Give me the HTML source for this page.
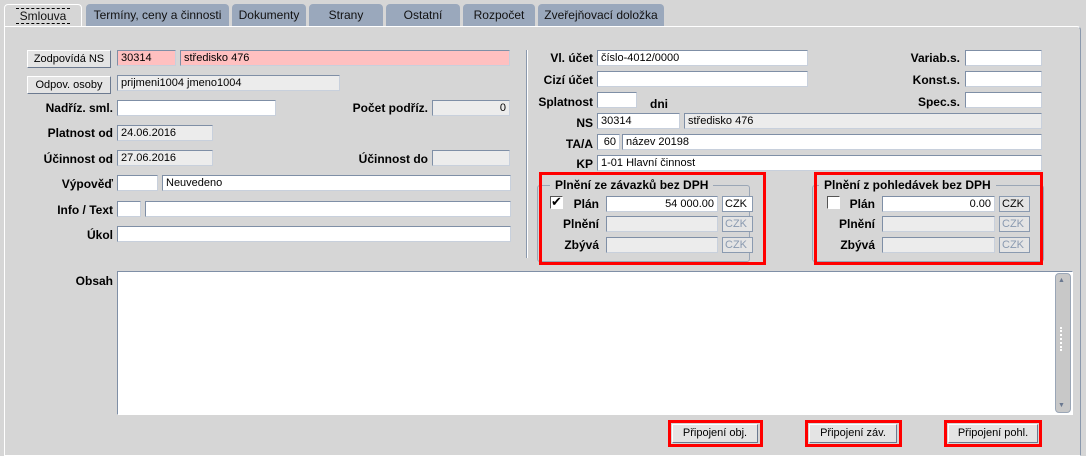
<!DOCTYPE html>
<html><head><meta charset="utf-8"><style>
*{box-sizing:border-box;margin:0;padding:0}
body{width:1086px;height:451px;background:#d6d6d6;font-family:"Liberation Sans",Arial,sans-serif;font-size:12px;color:#000;position:relative;overflow:hidden}
.a{position:absolute}
.tab{position:absolute;top:4px;height:22px;background:#9aa8bc;border-radius:4px 4px 0 0;text-align:center;line-height:22px;font-size:12px;color:#111}
.panel{position:absolute;left:4px;top:26px;width:1077px;height:430px;border:1px solid #fff;border-right-color:#8a98ac;border-radius:0 4px 0 0}
.f{position:absolute;height:16px;background:#fff;border:1px solid #7f8fa6;border-right-color:#c8d0dc;border-bottom-color:#c8d0dc;font-size:11px;line-height:14px;padding:0 3px;white-space:nowrap;overflow:hidden}
.g{background:#ececec}
.p{background:#ffc0c0}
.r{text-align:right}
.l{position:absolute;font-weight:bold;font-size:12px;white-space:nowrap}
.lr{position:absolute;font-weight:bold;font-size:12px;text-align:right;white-space:nowrap}
.btn{position:absolute;height:18px;background:#e4e4e4;border:1px solid #fff;border-right-color:#6c7a90;border-bottom-color:#6c7a90;font-size:11px;text-align:center;line-height:16px}
.red{position:absolute;border:3px solid #f00}
.grp{position:absolute;border:1px solid #9aa6b6;border-radius:3px}
.czk{position:absolute;height:16px;border:1px solid #8a9ab0;font-size:11px;line-height:14px;padding-left:2px;background:#fff}
.czkd{color:#8a9ab0;background:#e4e4e4}
.cb{position:absolute;width:13px;height:13px;background:#fff;border:1px solid #555;border-right-color:#fff;border-bottom-color:#fff}
</style></head><body>
<div class="panel"></div>
<div class="tab" style="left:4px;width:78px;background:#d6d6d6;border:1px solid #fff;border-bottom:none"><span style="border:1px dashed #000;border-width:1px 0;padding:0 4px">Smlouva</span></div>
<div class="tab" style="left:86px;width:143px">Termíny, ceny a činnosti</div>
<div class="tab" style="left:232px;width:74px">Dokumenty</div>
<div class="tab" style="left:309px;width:74px">Strany</div>
<div class="tab" style="left:386px;width:74px">Ostatní</div>
<div class="tab" style="left:463px;width:72px">Rozpočet</div>
<div class="tab" style="left:538px;width:126px">Zveřejňovací doložka</div>

<div class="btn" style="left:27px;top:50px;width:84px">Zodpovídá NS</div>
<div class="f p" style="left:117px;top:50px;width:59px">30314</div>
<div class="f p" style="left:180px;top:50px;width:330px">středisko 476</div>
<div class="btn" style="left:27px;top:76px;width:84px">Odpov. osoby</div>
<div class="f g" style="left:117px;top:75px;width:223px">prijmeni1004 jmeno1004</div>
<div class="lr" style="right:973px;top:101px">Nadříz. sml.</div>
<div class="f" style="left:117px;top:100px;width:159px"></div>
<div class="lr" style="right:658px;top:101px">Počet podříz.</div>
<div class="f g r" style="left:432px;top:100px;width:78px">0</div>
<div class="lr" style="right:973px;top:126px">Platnost od</div>
<div class="f g" style="left:117px;top:125px;width:96px">24.06.2016</div>
<div class="lr" style="right:973px;top:152px">Účinnost od</div>
<div class="f g" style="left:117px;top:150px;width:96px">27.06.2016</div>
<div class="lr" style="right:658px;top:152px">Účinnost do</div>
<div class="f g" style="left:432px;top:150px;width:78px"></div>
<div class="lr" style="right:973px;top:177px">Výpověď</div>
<div class="f" style="left:117px;top:175px;width:41px"></div>
<div class="f" style="left:162px;top:175px;width:349px">Neuvedeno</div>
<div class="lr" style="right:973px;top:203px">Info / Text</div>
<div class="f" style="left:117px;top:201px;width:24px"></div>
<div class="f" style="left:145px;top:201px;width:366px"></div>
<div class="lr" style="right:973px;top:228px">Úkol</div>
<div class="f" style="left:117px;top:226px;width:394px"></div>
<div class="a" style="left:526px;top:50px;width:2px;height:208px;border-left:1px solid #8a98ac;border-right:1px solid #fff"></div>

<div class="lr" style="right:493px;top:51px">Vl. účet</div>
<div class="f" style="left:597px;top:50px;width:211px">číslo-4012/0000</div>
<div class="lr" style="right:126px;top:51px">Variab.s.</div>
<div class="f" style="left:965px;top:50px;width:77px"></div>
<div class="lr" style="right:493px;top:73px">Cizí účet</div>
<div class="f" style="left:597px;top:71px;width:211px"></div>
<div class="lr" style="right:126px;top:73px">Konst.s.</div>
<div class="f" style="left:965px;top:71px;width:77px"></div>
<div class="lr" style="right:493px;top:95px">Splatnost</div>
<div class="f" style="left:597px;top:92px;width:40px"></div>
<div class="l" style="left:650px;top:97px">dni</div>
<div class="lr" style="right:126px;top:95px">Spec.s.</div>
<div class="f" style="left:965px;top:92px;width:77px"></div>
<div class="lr" style="right:493px;top:116px">NS</div>
<div class="f" style="left:597px;top:113px;width:83px">30314</div>
<div class="f g" style="left:684px;top:113px;width:358px">středisko 476</div>
<div class="lr" style="right:493px;top:137px">TA/A</div>
<div class="f r" style="left:597px;top:134px;width:23px">60</div>
<div class="f" style="left:622px;top:134px;width:420px">název 20198</div>
<div class="lr" style="right:493px;top:157px">KP</div>
<div class="f" style="left:597px;top:155px;width:445px">1-01 Hlavní činnost</div>

<div class="grp" style="left:537px;top:185px;width:213px;height:77px"></div>
<div class="l" style="left:550px;top:178px;background:#d6d6d6;padding:0 5px">Plnění ze závazků bez DPH</div>
<div class="cb" style="left:550px;top:196px;font-size:13px;line-height:10px;text-align:center">✔</div>
<div class="lr" style="right:487px;top:197px">Plán</div>
<div class="f r" style="left:606px;top:196px;width:112px">54 000.00</div>
<div class="czk" style="left:722px;top:196px;width:31px">CZK</div>
<div class="lr" style="right:487px;top:217px">Plnění</div>
<div class="f g" style="left:606px;top:216px;width:112px"></div>
<div class="czk czkd" style="left:722px;top:216px;width:31px">CZK</div>
<div class="lr" style="right:487px;top:238px">Zbývá</div>
<div class="f g" style="left:606px;top:237px;width:112px"></div>
<div class="czk czkd" style="left:722px;top:237px;width:31px">CZK</div>
<div class="red" style="left:539px;top:172px;width:227px;height:93px"></div>

<div class="grp" style="left:812px;top:185px;width:232px;height:77px"></div>
<div class="l" style="left:819px;top:178px;background:#d6d6d6;padding:0 5px">Plnění z pohledávek bez DPH</div>
<div class="cb" style="left:827px;top:196px"></div>
<div class="lr" style="right:211px;top:197px">Plán</div>
<div class="f r" style="left:882px;top:196px;width:113px">0.00</div>
<div class="czk" style="left:999px;top:196px;width:31px;background:#e4e4e4">CZK</div>
<div class="lr" style="right:211px;top:217px">Plnění</div>
<div class="f g" style="left:882px;top:216px;width:113px"></div>
<div class="czk czkd" style="left:999px;top:216px;width:31px">CZK</div>
<div class="lr" style="right:211px;top:238px">Zbývá</div>
<div class="f g" style="left:882px;top:237px;width:113px"></div>
<div class="czk czkd" style="left:999px;top:237px;width:31px">CZK</div>
<div class="red" style="left:814px;top:172px;width:229px;height:93px"></div>

<div class="lr" style="right:973px;top:274px">Obsah</div>
<div class="a" style="left:117px;top:271px;width:956px;height:144px;background:#fff;border:1px solid #7f8fa6;border-right-color:#fff;border-bottom-color:#fff"></div>
<div class="a" style="left:1055px;top:273px;width:16px;height:140px;background:#c8c8c8;border:1px solid #9aa6b6;border-radius:4px"></div>
<div class="a" style="left:1058px;top:277px;font-size:7px;color:#6a7890">▲</div>
<div class="a" style="left:1058px;top:402px;font-size:7px;color:#6a7890">▼</div>
<div class="a" style="left:1060px;top:327px;width:6px;height:24px;border-left:2px dotted #fff"></div>

<div class="red" style="left:668px;top:420px;width:95px;height:27px"></div>
<div class="btn" style="left:672px;top:424px;width:86px;height:19px">Připojení obj.</div>
<div class="red" style="left:805px;top:420px;width:97px;height:27px"></div>
<div class="btn" style="left:809px;top:424px;width:88px;height:19px">Připojení záv.</div>
<div class="red" style="left:944px;top:420px;width:98px;height:27px"></div>
<div class="btn" style="left:948px;top:424px;width:90px;height:19px">Připojení pohl.</div>
</body></html>
